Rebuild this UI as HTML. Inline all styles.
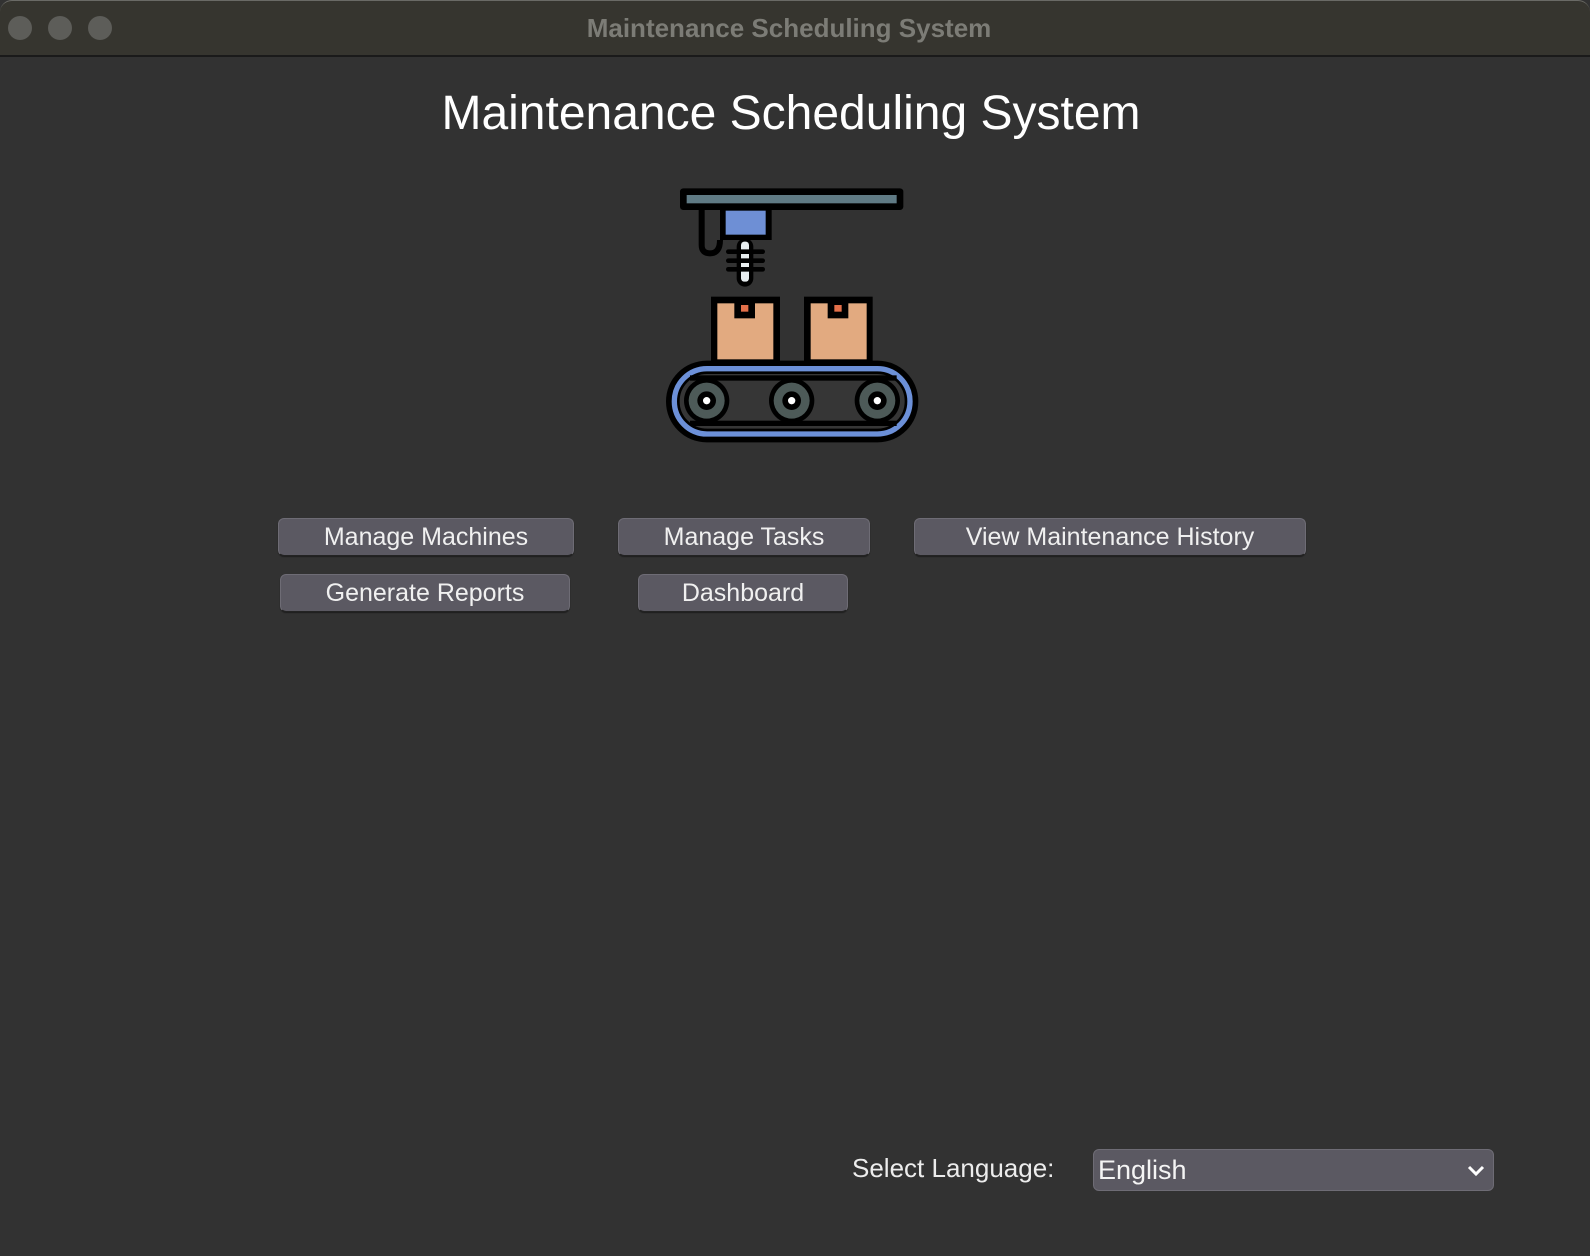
<!DOCTYPE html>
<html><head><meta charset="utf-8"><style>
*{margin:0;padding:0;box-sizing:border-box}
body{width:1590px;height:1256px;background:#323232;font-family:"Liberation Sans",sans-serif;position:relative;overflow:hidden}
.tb{position:absolute;left:0;top:0;width:1590px;height:57px;background:#36352f;border-bottom:2px solid #1a1a1a;border-radius:12px 12px 0 0;border-top:1px solid #6a6a66}
.tl{position:absolute;top:15px;width:24px;height:24px;border-radius:50%;background:#5d5d59}
.tt{position:absolute;left:0;right:12px;top:12px;text-align:center;color:#7c7c76;font-size:26px;font-weight:bold}
h1{position:absolute;left:0;width:1582px;top:86px;text-align:center;color:#fff;font-weight:normal;font-size:48px}
.b{position:absolute;height:38px;background:#5b5962;border:1px solid #6e6c75;border-bottom-color:#232323;border-radius:6px;color:#f0f0f0;font-size:25px;text-align:center;line-height:36px;box-shadow:0 1px 1px #1e1e1e}
.lab{position:absolute;left:852px;top:1153px;color:#ececec;font-size:26px}
.dd{position:absolute;left:1093px;top:1149px;width:401px;height:42px;background:#5b5962;border:1px solid #6e6c75;border-radius:6px;color:#f4f4f4;font-size:27px;line-height:40px;padding-left:4px}
</style></head><body>
<div class="tb"><div class="tl" style="left:8px"></div><div class="tl" style="left:48px"></div><div class="tl" style="left:88px"></div><div class="tt">Maintenance Scheduling System</div></div>
<h1>Maintenance Scheduling System</h1>
<svg style="position:absolute;left:640px;top:170px" width="300" height="290" viewBox="0 0 900 870">
<rect x="120" y="55" width="670" height="65" rx="10" fill="#000"/>
<rect x="140" y="75" width="630" height="25" fill="#5f7a84"/>
<path d="M185 118 V225 Q185 250 210 250 Q240 250 240 210" fill="none" stroke="#000" stroke-width="18"/>
<rect x="240" y="110" width="155" height="100" fill="#000"/>
<rect x="257" y="122" width="120" height="72" fill="#6e8fd5"/>
<rect x="290" y="205" width="50" height="145" rx="25" fill="#000"/>
<rect x="303" y="215" width="24" height="120" rx="10" fill="#e8eef0"/>
<g stroke="#000" stroke-width="14" stroke-linecap="round"><line x1="265" y1="245" x2="368" y2="245"/><line x1="265" y1="272" x2="368" y2="272"/><line x1="265" y1="298" x2="368" y2="298"/></g>
<rect x="213" y="380" width="207" height="200" fill="#000"/>
<rect x="232" y="400" width="168" height="168" fill="#e2aa80"/>
<rect x="283" y="395" width="62" height="50" fill="#000"/><rect x="303" y="405" width="22" height="20" fill="#e3704a"/>
<rect x="492" y="380" width="206" height="200" fill="#000"/>
<rect x="512" y="400" width="168" height="168" fill="#e2aa80"/>
<rect x="563" y="395" width="62" height="50" fill="#000"/><rect x="583" y="405" width="22" height="20" fill="#e3704a"/>
<rect x="78" y="572" width="757" height="245" rx="122" fill="#000"/>
<rect x="105" y="598" width="703" height="192" rx="96" fill="#363636" stroke="#6c90d8" stroke-width="20"/>
<rect x="115" y="608" width="683" height="172" rx="86" fill="none" stroke="#000" stroke-width="8"/>
<rect x="150" y="616" width="620" height="16" fill="#000"/>
<rect x="150" y="752" width="620" height="16" fill="#000"/>
<g><circle cx="200" cy="692" r="68" fill="#000"/><circle cx="200" cy="692" r="54" fill="#4d5a58"/><circle cx="200" cy="692" r="28" fill="#000"/><circle cx="200" cy="692" r="11" fill="#fff"/></g>
<g><circle cx="455" cy="692" r="68" fill="#000"/><circle cx="455" cy="692" r="54" fill="#4d5a58"/><circle cx="455" cy="692" r="28" fill="#000"/><circle cx="455" cy="692" r="11" fill="#fff"/></g>
<g><circle cx="712" cy="692" r="68" fill="#000"/><circle cx="712" cy="692" r="54" fill="#4d5a58"/><circle cx="712" cy="692" r="28" fill="#000"/><circle cx="712" cy="692" r="11" fill="#fff"/></g>
</svg>
<div class="b" style="left:278px;top:518px;width:296px">Manage Machines</div>
<div class="b" style="left:618px;top:518px;width:252px">Manage Tasks</div>
<div class="b" style="left:914px;top:518px;width:392px">View Maintenance History</div>
<div class="b" style="left:280px;top:574px;width:290px">Generate Reports</div>
<div class="b" style="left:638px;top:574px;width:210px">Dashboard</div>
<div class="lab">Select Language:</div>
<div class="dd">English<svg style="position:absolute;right:8px;top:14px" width="18" height="14" viewBox="0 0 18 14"><path d="M2 3 L9 10 L16 3" fill="none" stroke="#fff" stroke-width="3"/></svg></div>
</body></html>
